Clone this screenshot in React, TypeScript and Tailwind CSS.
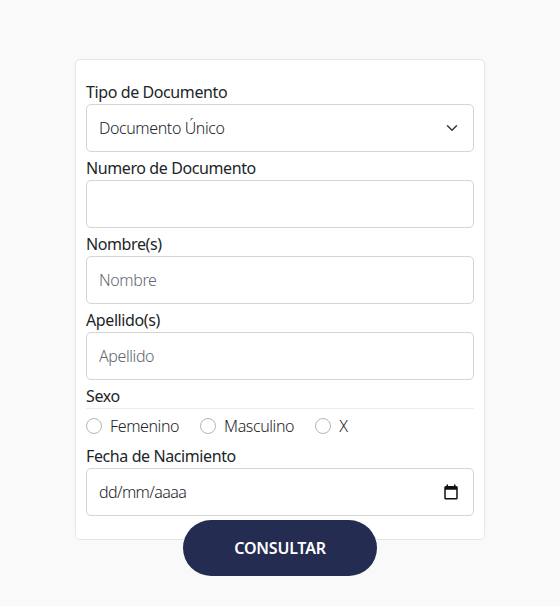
import React from "react";

function Label({ children, className = "pt-1 h-7" }: { children: React.ReactNode; className?: string }) {
  return <label className={`block text-[16px] leading-[24px] tracking-[-0.4px] text-[#212529] ${className}`}>{children}</label>;
}

function Field({ placeholder }: { placeholder?: string }) {
  return (
    <input
      placeholder={placeholder}
      className="block w-full h-[48px] rounded-[5px] border border-[#d4d4d4] bg-white px-3 text-[16px] font-light tracking-[-0.4px] text-[#212529] placeholder:text-[#5f6770] outline-none"
    />
  );
}

function Radio({ label }: { label: string }) {
  return (
    <div className="flex items-center gap-2">
      <span className="h-4 w-4 rounded-full border border-[#b5b5b5] bg-white" />
      <span className="text-[16px] font-light tracking-[-0.4px] text-[#212529]">{label}</span>
    </div>
  );
}

export default function App() {
  return (
    <div className="min-h-[606px] bg-[#f9f9f9] flex justify-center pt-[59px] font-['Noto_Sans',sans-serif]">
      <div className="relative w-[410px] h-[481px] bg-white border border-[#e6e6e6] rounded-[5px] px-[10px] pt-[16px]">
        <Label>Tipo de Documento</Label>
        <div className="flex items-center justify-between h-[48px] rounded-[5px] border border-[#d4d4d4] bg-white pl-3 pr-[15px]">
          <span className="text-[16px] font-light tracking-[-0.4px] text-[#212529]">Documento Único</span>
          <svg width="12" height="8" viewBox="0 0 12 8" fill="none" stroke="#343a40" strokeWidth="1.5" strokeLinecap="round" strokeLinejoin="round"><path d="M1.5 1.8L6 6.2l4.5-4.4" /></svg>
        </div>
        <Label>Numero de Documento</Label>
        <Field />
        <Label>Nombre(s)</Label>
        <Field placeholder="Nombre" />
        <Label>Apellido(s)</Label>
        <Field placeholder="Apellido" />
        <Label>Sexo</Label>
        <div className="flex items-center gap-[21px] h-[35px] border-t border-[#ececec]">
          <Radio label="Femenino" />
          <Radio label="Masculino" />
          <Radio label="X" />
        </div>
        <Label className="h-[25px] pt-px">Fecha de Nacimiento</Label>
        <div className="flex items-center justify-between h-[48px] rounded-[5px] border border-[#d4d4d4] bg-white pl-3 pr-[13px]">
          <span className="text-[16px] font-light tracking-[-0.6px] text-[#212529]">dd/mm/aaaa</span>
          <svg width="18" height="18" viewBox="0 0 24 24" fill="#111111"><path d="M19 4h-1V2h-2v2H8V2H6v2H5a2 2 0 0 0-2 2v14a2 2 0 0 0 2 2h14a2 2 0 0 0 2-2V6a2 2 0 0 0-2-2zm0 16H5V9h14v11z" /></svg>
        </div>
        <button className="absolute left-[107px] top-[460px] h-[56px] w-[194px] rounded-full bg-[#252c51] text-white font-semibold text-[16px] tracking-[-0.2px]">CONSULTAR</button>
      </div>
    </div>
  );
}
